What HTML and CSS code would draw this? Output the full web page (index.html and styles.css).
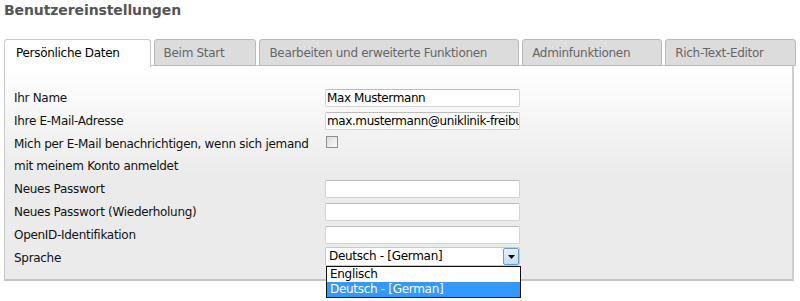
FILE: index.html
```html
<!DOCTYPE html>
<html lang="de">
<head>
    <meta charset="UTF-8">
    <title>Benutzereinstellungen</title>
    <link rel="stylesheet" href="styles.css">
</head>
<body>
    <h1 class="page-title">Benutzereinstellungen</h1>

    <!-- Reiter -->
    <div class="tabs">
        <div class="tab active">Persönliche Daten</div>
        <div class="tab">Beim Start</div>
        <div class="tab">Bearbeiten und erweiterte Funktionen</div>
        <div class="tab">Adminfunktionen</div>
        <div class="tab">Rich-Text-Editor</div>
    </div>

    <!-- Formular -->
    <div class="panel">
        <div class="form-row">
            <label>Ihr Name</label>
            <div class="field"><div class="text-input">Max Mustermann</div></div>
        </div>
        <div class="form-row">
            <label>Ihre E-Mail-Adresse</label>
            <div class="field"><div class="text-input">max.mustermann@uniklinik-freiburg.de</div></div>
        </div>
        <div class="form-row">
            <label>Mich per E-Mail benachrichtigen, wenn sich jemand mit meinem Konto anmeldet</label>
            <div class="field top"><span class="checkbox"></span></div>
        </div>
        <div class="form-row">
            <label>Neues Passwort</label>
            <div class="field"><div class="text-input"></div></div>
        </div>
        <div class="form-row">
            <label>Neues Passwort (Wiederholung)</label>
            <div class="field"><div class="text-input"></div></div>
        </div>
        <div class="form-row">
            <label>OpenID-Identifikation</label>
            <div class="field"><div class="text-input"></div></div>
        </div>
        <div class="form-row">
            <label>Sprache</label>
            <div class="field top">
                <div class="select">
                    <span class="select-value">Deutsch - [German]</span>
                    <span class="select-button">
                        <svg width="7" height="4" viewBox="0 0 7 4"><path d="M0 0h7L3.5 4z" fill="#000"/></svg>
                    </span>
                    <ul class="dropdown">
                        <li>Englisch</li>
                        <li class="selected">Deutsch - [German]</li>
                    </ul>
                </div>
            </div>
        </div>
    </div>
</body>
</html>
```

FILE: styles.css
```css
/* Grundlayout */
html {
    height: 100%;
}
body {
    box-sizing: border-box;
    min-height: 301px;
    margin: 0;
    padding: 1px 6px 22px 4px;
    font-family: 'DejaVu Sans', Verdana, sans-serif;
    font-size: 12px;
    letter-spacing: -0.3px;
    color: #000;
    background: #fff;
}

.page-title {
    margin: 0 0 20px 0;
    font-size: 14px;
    line-height: 18px;
    letter-spacing: -0.1px;
    font-weight: bold;
    color: #555;
}

/* Reiter */
.tabs {
    display: flex;
    gap: 3px;
    height: 27px;
    position: relative;
    z-index: 1;
}
.tab {
    box-sizing: border-box;
    height: 27px;
    padding: 0 31px 0 9px;
    line-height: 26px;
    color: #666;
    background: #dcdcdc;
    border: 1px solid #b9b9b9;
    border-radius: 3px 3px 0 0;
    white-space: nowrap;
}
.tab.active {
    height: 28px;
    padding-left: 11px;
    padding-right: 30px;
    color: #000;
    background: #fff;
    border-color: #c8c8c8;
    border-bottom: none;
}

/* Inhalt */
.panel {
    box-sizing: border-box;
    width: 790px;
    margin-top: -1px;
    padding: 21px 0 10px 9px;
    border: 1px solid #c8c8c8;
    border-bottom: 2px solid #c4c4c4;
    border-right: 2px solid #cfcfcf;
    background: linear-gradient(#fff, #ebebeb 110px);
    display: flex;
    flex-direction: column;
    gap: 1px;
}

.form-row {
    display: grid;
    grid-template-columns: 311px 195px;
}
.form-row label {
    line-height: 22px;
    color: #111;
}
.field {
    display: flex;
    align-items: center;
}
.field.top {
    align-items: flex-start;
}

.text-input {
    box-sizing: border-box;
    width: 195px;
    height: 18px;
    padding: 0 1px;
    line-height: 16px;
    font-size: 12px;
    letter-spacing: -0.4px;
    background: #fff;
    border: 1px solid #d3d3d3;
    border-top-color: #bcbcbc;
    border-radius: 2px;
    overflow: hidden;
    white-space: nowrap;
}

.checkbox {
    box-sizing: border-box;
    width: 12px;
    height: 12px;
    margin: 3px 0 0 1px;
    border: 1px solid #8f8f8f;
    background: linear-gradient(135deg, #dcdcdc, #fafafa);
}

/* Auswahlliste */
.select {
    position: relative;
    box-sizing: border-box;
    width: 195px;
    height: 19px;
    padding: 0 3px;
    line-height: 17px;
    background: #fff;
    border: 1px solid #c8c8c8;
    border-radius: 2px;
}
.select-button {
    position: absolute;
    top: 0;
    right: 0;
    box-sizing: border-box;
    width: 16px;
    height: 17px;
    border: 1px solid #6e9acb;
    border-radius: 2px;
    background: linear-gradient(#e6f1fc, #c4ddf5);
    display: flex;
    align-items: center;
    justify-content: center;
}
.dropdown {
    position: absolute;
    top: 18px;
    left: 0;
    width: 193px;
    margin: 0;
    padding: 0;
    list-style: none;
    background: #fff;
    border: 1px solid #111;
}
.dropdown li {
    height: 15px;
    padding: 0 3px;
    line-height: 15px;
}
.dropdown li.selected {
    background: #3399ff;
    color: #fff;
}
```
